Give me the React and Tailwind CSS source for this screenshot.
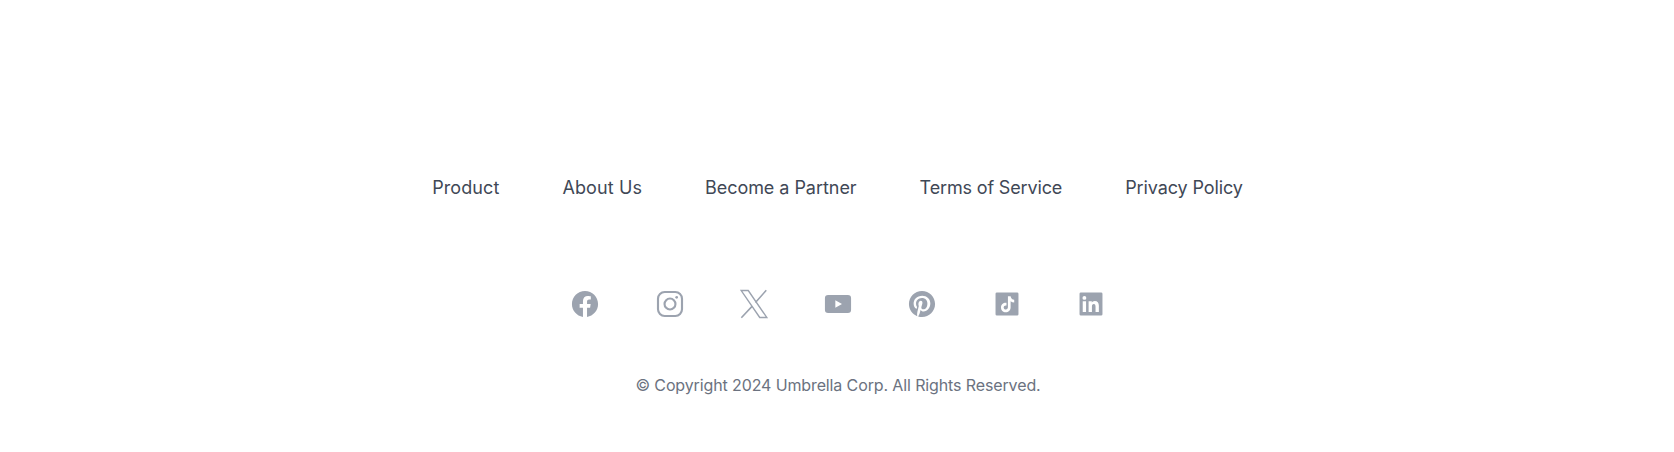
import React from "react";
const links = [
  ["Product", "tracking-[0.1px]"],
  ["About Us", "tracking-[0.1px]"],
  ["Become a Partner", "tracking-[-0.045px]"],
  ["Terms of Service", "tracking-[-0.15px]"],
  ["Privacy Policy", "tracking-[-0.1px]"],
];
const cls = "w-8 h-8";
const Fb = () => (<svg viewBox="0 0 24 24" className={cls} fill="currentColor"><path fillRule="evenodd" clipRule="evenodd" d="M21.8 12c0-5.41-4.39-9.8-9.8-9.8S2.2 6.59 2.2 12c0 4.89 3.58 8.95 8.27 9.68v-6.85H7.98V12h2.49V9.84c0-2.46 1.46-3.81 3.7-3.81 1.07 0 2.19.19 2.19.19v2.41h-1.23c-1.22 0-1.6.76-1.6 1.53V12h2.72l-.43 2.83h-2.29v6.85C18.22 20.95 21.8 16.89 21.8 12z"/></svg>);
const Ig = () => (<svg viewBox="0 0 24 24" className={cls} fill="none" stroke="currentColor" strokeWidth="1.6"><rect x="3" y="3" width="18" height="18" rx="5"/><circle cx="12" cy="12" r="4.1"/><circle cx="17" cy="7" r="1" fill="currentColor" stroke="none"/></svg>);
const X = () => (<svg viewBox="0 0 24 24" className={cls} fill="none" stroke="currentColor" strokeWidth="1.05"><path d="M2.4 1.9h5.3l13.9 20.2h-5.3z"/><path d="M21.2 1.7l-8.1 9.2M10.7 13.6l-8.2 8.7" strokeWidth="1.2"/></svg>);
const Yt = () => (<svg viewBox="0 0 24 24" className={cls} fill="currentColor"><path fillRule="evenodd" clipRule="evenodd" d="M4.6 5.2h14.8a2.4 2.4 0 0 1 2.4 2.4v8.8a2.4 2.4 0 0 1-2.4 2.4H4.6a2.4 2.4 0 0 1-2.4-2.4V7.6a2.4 2.4 0 0 1 2.4-2.4zM10 9.1v5.8l5-2.9z"/></svg>);
const Pin = () => (<svg viewBox="0 0 24 24" className={cls} fill="currentColor"><path d="M12 2.2c-5.41 0-9.8 4.39-9.8 9.8 0 4.15 2.59 7.7 6.23 9.12-.09-.77-.17-1.96.03-2.8.18-.76 1.15-4.87 1.15-4.87s-.29-.59-.29-1.45c0-1.36.79-2.38 1.77-2.38.83 0 1.24.63 1.24 1.38 0 .84-.54 2.1-.81 3.26-.24.98.49 1.77 1.45 1.77 1.74 0 3.08-1.83 3.08-4.49 0-2.34-1.69-3.99-4.1-3.99-2.79 0-4.43 2.1-4.43 4.25 0 .84.32 1.74.73 2.23.08.1.09.19.07.28-.08.31-.25.98-.27 1.12-.04.18-.15.22-.33.13-1.23-.57-1.99-2.36-1.99-3.79 0-3.09 2.24-5.93 6.47-5.93 3.4 0 6.04 2.42 6.04 5.65 0 3.37-2.13 6.09-5.08 6.09-.99 0-1.92-.52-2.24-1.13l-.61 2.33c-.22.85-.82 1.91-1.22 2.57.92.28 1.9.44 2.91.44 5.41 0 9.8-4.39 9.8-9.8S17.41 2.2 12 2.2z"/></svg>);
const Tt = () => (<svg viewBox="0 0 24 24" className={cls} fill="currentColor"><path fillRule="evenodd" clipRule="evenodd" d="M4.4 3.4h15.2a1 1 0 0 1 1 1v15.2a1 1 0 0 1-1 1H4.4a1 1 0 0 1-1-1V4.4a1 1 0 0 1 1-1zM12.7 6.2h2c.2 1.5 1.2 2.5 2.7 2.7v2c-1 0-1.9-.3-2.7-.9v4.6c0 2.2-1.7 3.6-3.6 3.6-2.1 0-3.6-1.6-3.6-3.6 0-2.2 1.9-3.8 4.1-3.5v2.1c-1-.3-2.1.4-2.1 1.4 0 .9.8 1.6 1.6 1.6 1 0 1.6-.8 1.6-1.7z"/></svg>);
const Li = () => (<svg viewBox="0 0 24 24" className={cls} fill="currentColor"><path fillRule="evenodd" clipRule="evenodd" d="M4.4 3.4h15.2a1 1 0 0 1 1 1v15.2a1 1 0 0 1-1 1H4.4a1 1 0 0 1-1-1V4.4a1 1 0 0 1 1-1zM5.8 10v8h2.5v-8zM7.05 6a1.45 1.45 0 1 0 0 2.9 1.45 1.45 0 0 0 0-2.9zM10.2 10v8h2.5v-4.1c0-1.1.4-1.9 1.4-1.9s1.3.9 1.3 2V18h2.5v-4.6c0-2.3-1.1-3.6-3-3.6-1.2 0-2 .6-2.3 1.3V10z"/></svg>);
const icons = [Fb, Ig, X, Yt, Pin, Tt, Li];
export default function App() {
  return (
    <footer className="bg-white h-[452px] pt-[172px] flex flex-col items-center font-['Inter',sans-serif]">
      <nav className="flex gap-[63px] h-[32px] items-center pl-px">
        {links.map(([l, t]) => <a key={l} className={"text-[18px] leading-7 text-[#3f4856] " + t}>{l}</a>)}
      </nav>
      <div className="flex mt-[83.5px] gap-[52.25px] items-center h-8 pl-[2px]">
        {icons.map((I, i) => <a key={i} className="w-8 h-8 flex items-center justify-center text-[#9ca3af]"><I /></a>)}
      </div>
      <p className="mt-[53.5px] pl-0.5 text-base leading-6 tracking-[-0.12px] text-[#6b7280]">© Copyright 2024 Umbrella Corp. All Rights Reserved.</p>
    </footer>
  );
}
